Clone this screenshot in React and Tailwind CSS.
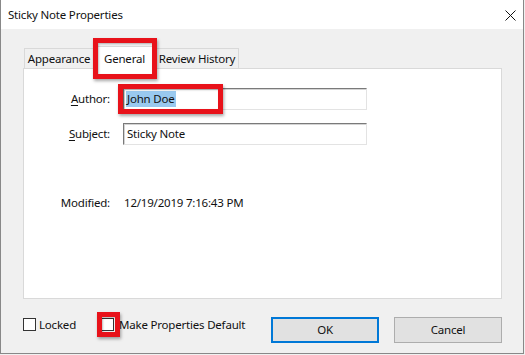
import React from 'react';

const font = { fontFamily: '"Segoe UI", "Noto Sans", sans-serif' };

const RedBox = ({ className }) => (
  <div
    className={`absolute border-[5px] border-[#e8121a] shadow-[1px_2px_3px_rgba(0,0,0,0.35),inset_1px_1px_2px_rgba(0,0,0,0.25)] pointer-events-none ${className}`}
  ></div>
);

const Field = ({ label, accel, value, selected, boxed }) => (
  <div className="flex items-center h-[22px]">
    <div className="w-[86px] text-right">
      <span className="underline underline-offset-2">{accel}</span>
      {label}
    </div>
    <div className="relative ml-[13px] w-[244px] h-[22px] bg-white border border-t-[#7a7a7a] border-l-[#7a7a7a] border-r-[#e3e3e3] border-b-[#e3e3e3] shadow-[inset_1px_1px_0_#d4d4d4] flex items-center pl-[2px]">
      <span className={selected ? 'bg-[#99c9ef] px-px leading-[16px]' : 'px-px leading-[16px]'}>{value}</span>
      {boxed && <RedBox className="-left-[6px] -top-[5px] w-[105px] h-[30px]" />}
    </div>
  </div>
);

const Checkbox = ({ label, gap, boxed }) => (
  <div className="flex items-center">
    <div className="relative w-[13px] h-[13px] bg-white border border-[#333333]">
      {boxed && <RedBox className="-left-[5px] -top-[7px] w-[23px] h-[25px] border-[4px]" />}
    </div>
    <span className={gap}>{label}</span>
  </div>
);

export default function App() {
  return (
    <div className="w-[525px] h-[355px] bg-[#f0f0f0] text-[11.5px] tracking-[-0.2px] whitespace-nowrap text-[#111]" style={font}>
      <div className="w-[524px] h-[354px] flex flex-col bg-[#f0f0f0] border-l border-r border-b border-[#888888]">
        {/* title bar */}
        <div className="h-[29px] bg-white flex items-center justify-between pl-[7px] pr-[7px]">
          <span>Sticky Note Properties</span>
          <svg width="11" height="11" viewBox="0 0 11 11" className="mt-[1px]">
            <path d="M0.5 0.5 L10.5 10.5 M10.5 0.5 L0.5 10.5" stroke="#111" strokeWidth="1" />
          </svg>
        </div>

        <div className="flex-1 flex flex-col pl-[22px] pr-[21px]">
          {/* tabs */}
          <div className="mt-[17px] h-[22px] flex items-end pl-[1px]">
            <div className="w-[70px] h-[20px] flex items-center justify-center bg-[#f0f0f0] border border-b-0 border-[#d9d9d9]">
              Appearance
            </div>
            <div className="relative z-10 -ml-px w-[63px] h-[23px] -mb-px flex items-start justify-center pt-[3px] bg-white border border-b-0 border-[#d9d9d9]">
              General
              <RedBox className="-left-[1px] -top-[9px] w-[64px] h-[41px]" />
            </div>
            <div className="-ml-px w-[84px] h-[20px] flex items-center justify-center bg-[#f0f0f0] border border-b-0 border-[#d9d9d9]">
              Review History
            </div>
          </div>

          {/* panel */}
          <div className="h-[231px] bg-white border border-[#d9d9d9] pt-[19px]">
            <Field accel="A" label="uthor:" value="John Doe" selected boxed />
            <div className="mt-[13px]">
              <Field accel="S" label="ubject:" value="Sticky Note" />
            </div>
            <div className="mt-[47px] flex items-center h-[22px]">
              <div className="w-[86px] text-right">Modified:</div>
              <div className="ml-[14px]">12/19/2019 7:16:43 PM</div>
            </div>
          </div>

          {/* bottom row */}
          <div className="mt-[18px] flex items-start">
            <div className="w-[78px] -mt-[1px]">
              <Checkbox label="Locked" gap="ml-[3px]" />
            </div>
            <div className="-mt-[1px]">
              <Checkbox label="Make Properties Default" gap="ml-[5px]" boxed />
            </div>
            <div className="ml-auto flex gap-[15px]">
              <button className="w-[108px] h-[26px] bg-[#e1e1e1] border-2 border-[#0078d7]">OK</button>
              <button className="w-[108px] h-[26px] bg-[#e1e1e1] border border-[#adadad]">Cancel</button>
            </div>
          </div>
        </div>
      </div>
    </div>
  );
}
